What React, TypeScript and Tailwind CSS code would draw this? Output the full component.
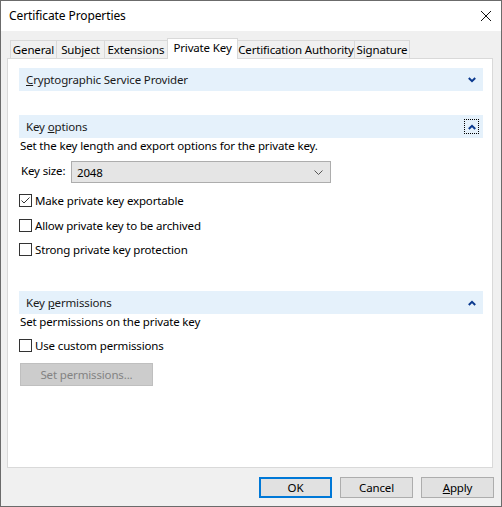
import React from "react";

// Tabs across the top of the property sheet
const tabs = [
    { label: "General", width: "w-[47px]" },
    { label: "Subject", width: "w-[49px]" },
    { label: "Extensions", width: "w-[64px]" },
    { label: "Private Key", width: "w-[71px]", active: true },
    { label: "Certification Authority", width: "w-[118px]" },
    { label: "Signature", width: "w-[56px]" },
];

const Chevron = ({ up = false }: { up?: boolean }) => (
    <svg width="8" height="6" viewBox="0 0 8 6" className="block">
        <polyline
            points={up ? "0.8,5 4,1.8 7.2,5" : "0.8,1 4,4.2 7.2,1"}
            fill="none"
            stroke="#0b3a8f"
            strokeWidth="2"
        />
    </svg>
);

const SectionHeader = ({
    children,
    up = false,
    focused = false,
    className = "",
}: {
    children: React.ReactNode;
    up?: boolean;
    focused?: boolean;
    className?: string;
}) => (
    <div
        className={`flex items-center justify-between h-[23px] bg-[#e5f1fb] pl-[7px] pr-[4px] ${className}`}
    >
        <span className="text-[#1a1a1a]">{children}</span>
        <div
            className={`w-[15px] h-[15px] flex items-center justify-center border border-dotted ${
                focused ? "border-black" : "border-transparent"
            }`}
        >
            <Chevron up={up} />
        </div>
    </div>
);

const CheckBox = ({
    label,
    checked = false,
    className = "",
}: {
    label: string;
    checked?: boolean;
    className?: string;
}) => (
    <div className={`flex items-center h-[17px] ${className}`}>
        <div className="w-[13px] h-[13px] border border-[#333333] bg-white flex items-center justify-center">
            {checked && (
                <svg width="11" height="11" viewBox="0 0 11 11" className="block">
                    <polyline
                        points="1.5,5.5 4,8 9.5,2.5"
                        fill="none"
                        stroke="#333333"
                        strokeWidth="1"
                    />
                </svg>
            )}
        </div>
        <span className="ml-[3px] text-black">{label}</span>
    </div>
);

export default function App() {
    return (
        <div
            className="w-[502px] h-[507px] bg-[#f0f0f0] border border-[#6b6b6b] flex flex-col text-black text-[11.5px] tracking-[-0.15px] whitespace-nowrap"
            style={{ fontFamily: '"Noto Sans", "Open Sans", sans-serif' }}
        >
            {/* Title bar */}
            <div className="h-[30px] bg-white flex items-center justify-between pl-[8px] pr-[10px]">
                <span className="text-[12px] tracking-[-0.1px]">Certificate Properties</span>
                <svg width="10" height="10" viewBox="0 0 10 10" className="block">
                    <path d="M0 0 L10 10 M10 0 L0 10" stroke="#111111" strokeWidth="1" />
                </svg>
            </div>

            {/* Body */}
            <div className="flex-1 flex flex-col pl-[6px] pr-[8px] pt-[7px]">
                {/* Tab strip */}
                <div className="h-[20px] flex items-end pl-[3px] relative z-10">
                    {tabs.map((tab, i) => (
                        <div
                            key={tab.label}
                            className={`${tab.width} ${i > 0 ? "-ml-[1px]" : ""} flex items-center justify-center border-l border-t border-r border-[#d9d9d9] ${
                                tab.active
                                    ? "h-[21px] -mb-[1px] bg-white pb-[3px]"
                                    : "h-[18px] bg-[#f0f0f0]"
                            }`}
                        >
                            {tab.label}
                        </div>
                    ))}
                </div>

                {/* Tab page */}
                <div className="h-[410px] bg-white border border-[#d9d9d9] flex flex-col pl-[11px] pr-[9px]">
                    <SectionHeader className="mt-[9px]">
                        <u>C</u>ryptographic Service Provider
                    </SectionHeader>

                    <SectionHeader className="mt-[24px]" up focused>
                        Key <u>o</u>ptions
                    </SectionHeader>
                    <div className="h-[16px] leading-[16px] pl-[1px]">
                        Set the key length and export options for the private key.
                    </div>
                    <div className="mt-[7px] flex items-center h-[22px]">
                        <span className="w-[52px] pl-[2px] -mt-[3px]">Key size:</span>
                        <div className="w-[260px] h-[22px] bg-[#e5e5e5] border border-[#adadad] flex items-center justify-between pl-[5px] pr-[7px]">
                            <span className="mt-[1px]">2048</span>
                            <svg width="9" height="5" viewBox="0 0 9 5" className="block">
                                <polyline points="0.5,0.5 4.5,4.5 8.5,0.5" fill="none" stroke="#555555" strokeWidth="1" />
                            </svg>
                        </div>
                    </div>
                    <CheckBox className="mt-[9px]" label="Make private key exportable" checked />
                    <CheckBox className="mt-[8px]" label="Allow private key to be archived" />
                    <CheckBox className="mt-[7px]" label="Strong private key protection" />

                    <SectionHeader className="mt-[33px]" up>
                        Key <u>p</u>ermissions
                    </SectionHeader>
                    <div className="h-[16px] leading-[16px] pl-[1px]">
                        Set permissions on the private key
                    </div>
                    <CheckBox className="mt-[7px]" label="Use custom permissions" />
                    <div className="mt-[9px] ml-[1px] w-[133px] h-[23px] bg-[#cccccc] border border-[#bfbfbf] flex items-center justify-center text-[#838383]">
                        Set permissions...
                    </div>
                </div>

                {/* Dialog buttons */}
                <div className="mt-[9px] flex justify-end gap-[8px] -mr-[1px]">
                    <div className="w-[73px] h-[21px] bg-[#e1e1e1] border-2 border-[#0078d7] flex items-center justify-center">
                        OK
                    </div>
                    <div className="w-[73px] h-[21px] bg-[#e1e1e1] border border-[#adadad] flex items-center justify-center">
                        Cancel
                    </div>
                    <div className="w-[73px] h-[21px] bg-[#e1e1e1] border border-[#adadad] flex items-center justify-center">
                        <span><u>A</u>pply</span>
                    </div>
                </div>
            </div>
        </div>
    );
}
